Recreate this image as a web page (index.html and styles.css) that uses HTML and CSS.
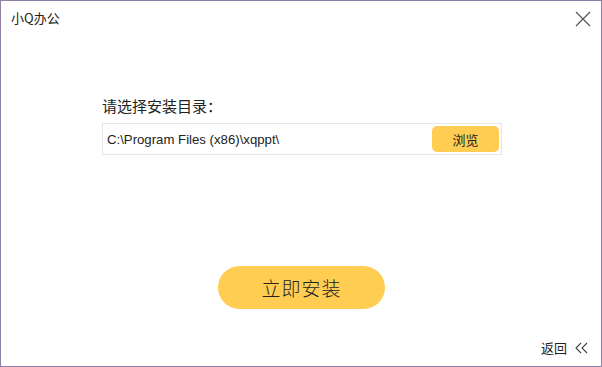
FILE: index.html
```html
<!DOCTYPE html>
<html lang="zh">
<head>
    <meta charset="UTF-8">
    <title>小Q办公</title>
    <link rel="stylesheet" href="styles.css">
</head>
<body>
<div class="window">
    <header class="titlebar">
        <span class="title">小Q办公</span>
        <svg class="close" width="16" height="16" viewBox="0 0 16 16">
            <path d="M1 1 L15 15 M15 1 L1 15" stroke="#555" stroke-width="1.2" fill="none"/>
        </svg>
    </header>
    <main class="content">
        <div class="path-group">
            <div class="label">请选择安装目录：</div>
            <div class="path-box">
                <span class="path">C:\Program Files (x86)\xqppt\</span>
                <button class="browse">浏览</button>
            </div>
        </div>
        <button class="install">立即安装</button>
    </main>
    <footer class="footer">
        <span class="back">返回</span>
        <svg class="chev" width="13" height="12" viewBox="0 0 13 12">
            <path d="M6 1 L1 6 L6 11 M12 1 L7 6 L12 11" stroke="#444" stroke-width="1.1" fill="none"/>
        </svg>
    </footer>
</div>
</body>
</html>
```
FILE: styles.css
```css
* {
    margin: 0;
    padding: 0;
    box-sizing: border-box;
}

html, body {
    height: 100%;
}

body {
    font-family: "Microsoft YaHei", "Noto Sans CJK SC", sans-serif;
    color: #222;
    background: #fff;
}

.window {
    height: 367px;
    width: 602px;
    border: 1px solid #8e7fa6;
    display: flex;
    flex-direction: column;
}

.titlebar {
    height: 34px;
    display: flex;
    align-items: center;
    justify-content: space-between;
    padding: 0 10px 0 10px;
}

.title {
    font-size: 13px;
    margin-top: -1px;
}

.close {
    margin-top: 1px;
}

.content {
    flex: 1;
    display: flex;
    flex-direction: column;
    align-items: center;
}

.path-group {
    width: 400px;
    margin-left: 2px;
    margin-top: 61px;
}

.label {
    font-size: 15px;
    line-height: 20px;
    margin-bottom: 7px;
}

.path-box {
    height: 32px;
    border: 1px solid #e6e6e6;
    display: flex;
    align-items: center;
    justify-content: space-between;
    padding: 0 2px 0 4px;
}

.path {
    font-family: "Liberation Sans", "Noto Sans CJK SC", sans-serif;
    font-size: 13.2px;
    color: #222;
}

.browse {
    width: 67px;
    height: 26px;
    border: none;
    border-radius: 5px;
    background: #fecd52;
    font-family: "Noto Sans CJK SC", sans-serif;
    font-size: 13px;
    color: #222;
}

.install {
    margin-top: 111px;
    margin-left: 1px;
    width: 167px;
    height: 43px;
    border: none;
    border-radius: 22px;
    background: #fecd52;
    font-family: "Noto Sans CJK SC", sans-serif;
    font-weight: 300;
    font-size: 19px;
    letter-spacing: 1px;
    color: #222;
}

.footer {
    height: 38px;
    display: flex;
    justify-content: flex-end;
    align-items: center;
    padding-right: 13px;
    gap: 8px;
}

.back {
    font-size: 13px;
}

.chev {
    margin-top: 1px;
}
```
